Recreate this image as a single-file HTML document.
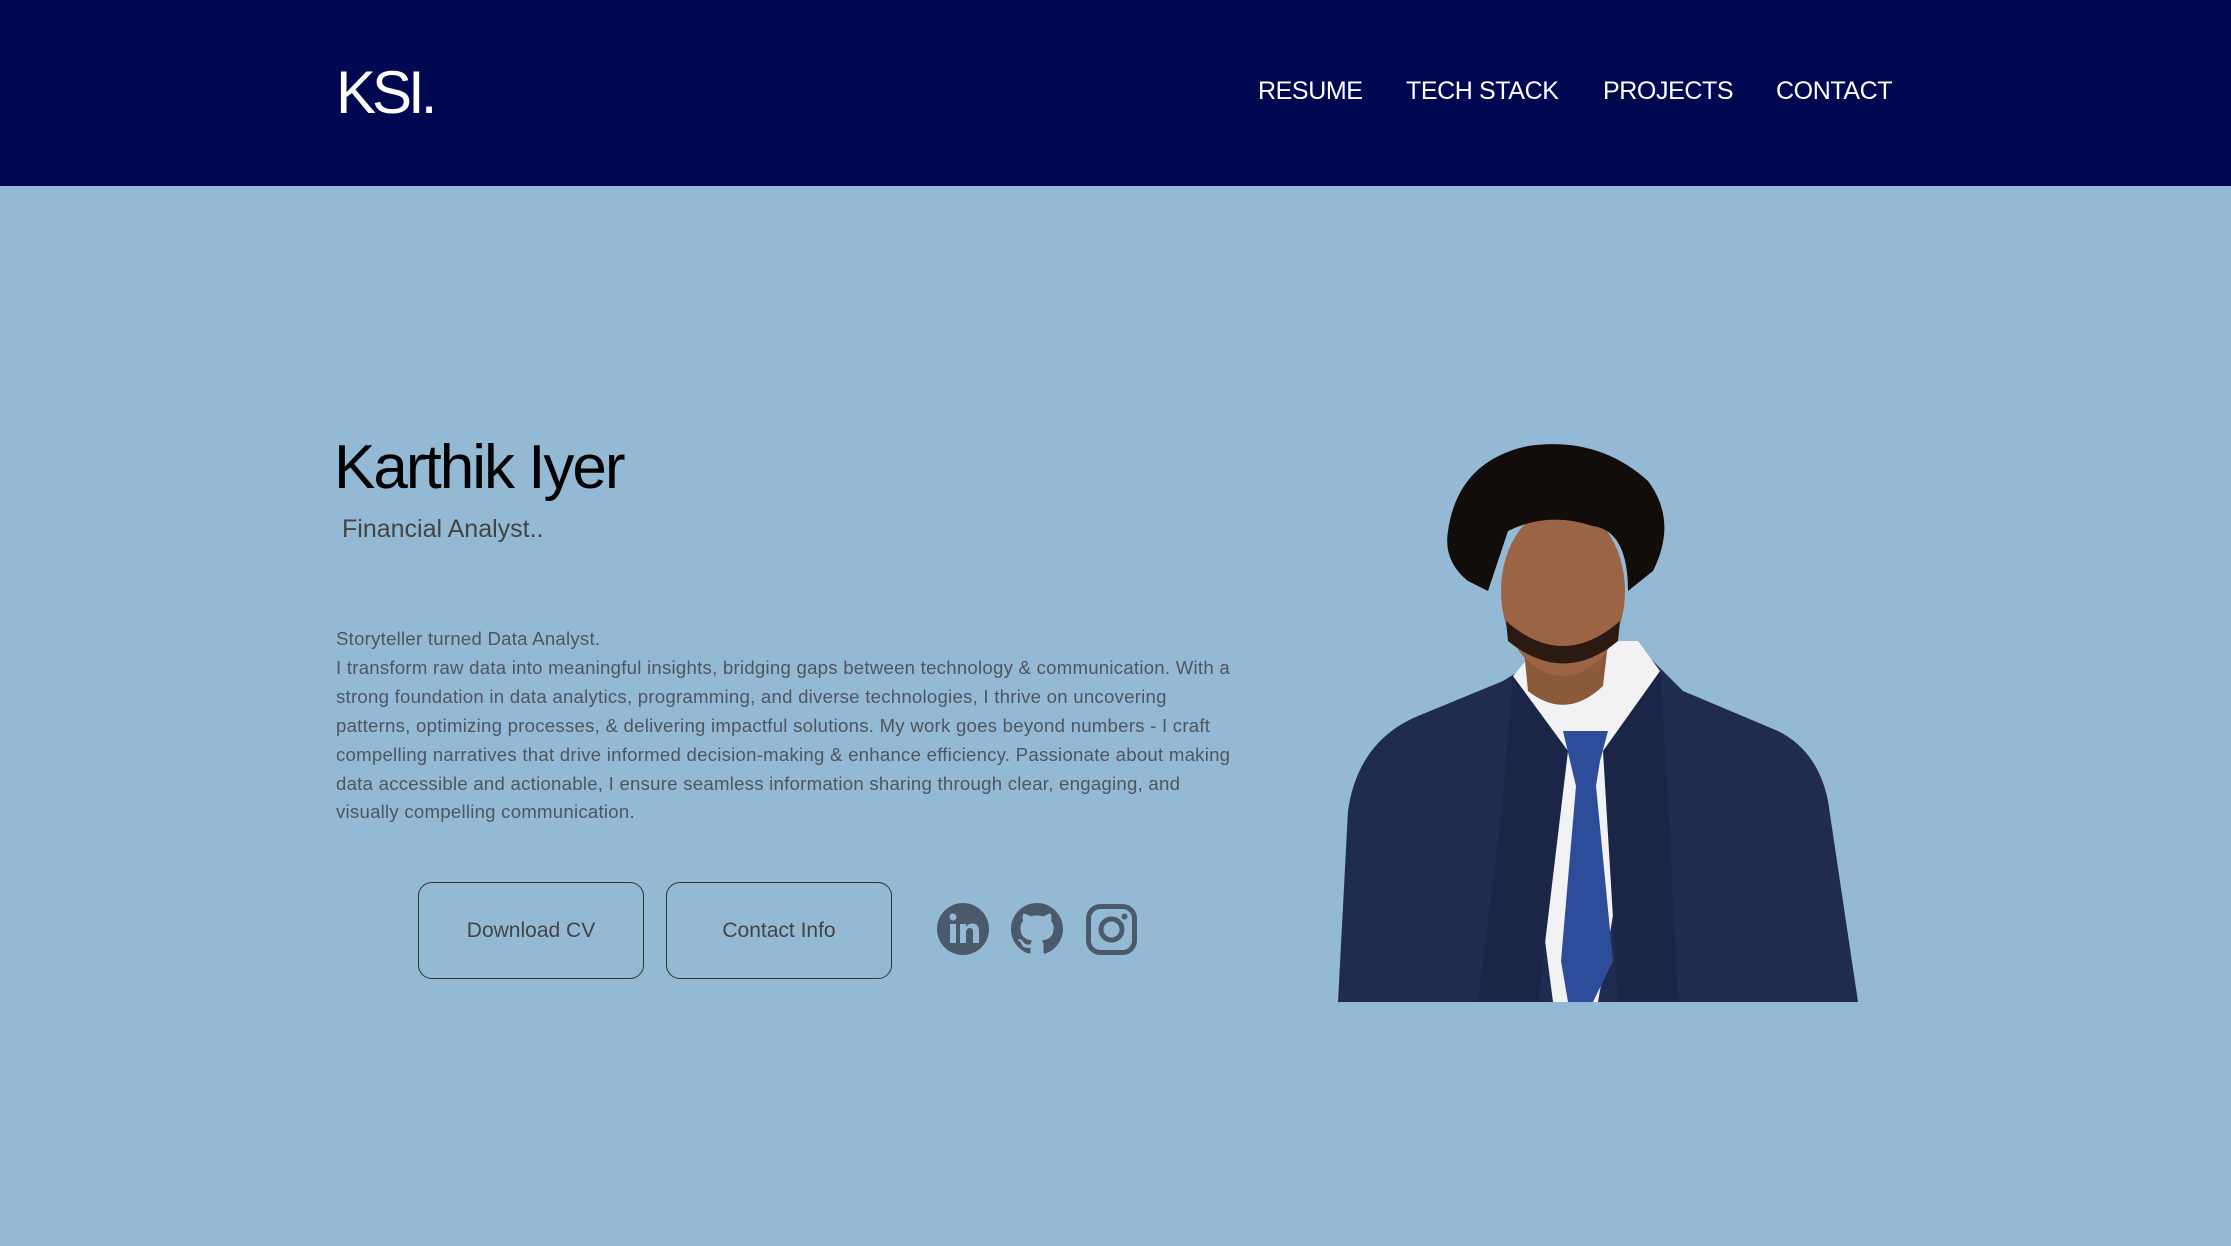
<!DOCTYPE html>
<html><head><meta charset="utf-8"><style>
*{margin:0;padding:0;box-sizing:border-box}
body{width:2231px;height:1246px;background:#94b9d5;font-family:"Liberation Sans",sans-serif;position:relative;overflow:hidden}
.hdr{position:absolute;left:0;top:0;width:2231px;height:186px;background:#000852}
.logo{position:absolute;left:336px;top:58px;font-size:60px;color:#fff;letter-spacing:-4px}
.nav{position:absolute;top:77px;font-size:25px;color:#fff;letter-spacing:-0.4px}
.name{position:absolute;left:334px;top:432px;font-size:62px;color:#000;letter-spacing:-2px}
.sub{position:absolute;left:342px;top:515px;font-size:25px;color:#444}
.para{position:absolute;left:336px;top:625px;width:910px;font-size:18.6px;line-height:28.9px;color:#4e5560;letter-spacing:0.25px}
.btn{position:absolute;top:882px;width:226px;height:97px;border:1.5px solid #333;border-radius:14px;font-size:21px;color:#444;display:flex;align-items:center;justify-content:center}
</style></head><body>
<div class="hdr">
<div class="logo">KSI.</div>
<div class="nav" style="left:1258px">RESUME</div>
<div class="nav" style="left:1406px">TECH STACK</div>
<div class="nav" style="left:1603px">PROJECTS</div>
<div class="nav" style="left:1776px">CONTACT</div>
</div>
<div class="name">Karthik Iyer</div>
<div class="sub">Financial Analyst..</div>
<div class="para">Storyteller turned Data Analyst.<br>I transform raw data into meaningful insights, bridging gaps between technology &amp; communication. With a strong foundation in data analytics, programming, and diverse technologies, I thrive on uncovering patterns, optimizing processes, &amp; delivering impactful solutions. My work goes beyond numbers - I craft compelling narratives that drive informed decision-making &amp; enhance efficiency. Passionate about making data accessible and actionable, I ensure seamless information sharing through clear, engaging, and visually compelling communication.</div>
<div class="btn" style="left:418px">Download CV</div>
<div class="btn" style="left:666px">Contact Info</div>
<svg style="position:absolute;left:937px;top:903px" width="52" height="52" viewBox="0 0 52 52"><circle cx="26" cy="26" r="26" fill="#4a5a6a"/><rect x="13" y="21" width="6" height="19" fill="#94b9d5"/><circle cx="16" cy="14" r="3.5" fill="#94b9d5"/><path d="M23 21h6v3c1.5-2.5 4-3.5 6.5-3.5 4.5 0 6.5 3 6.5 8V40h-6V29c0-2.5-1-4-3-4s-4 1.5-4 4.5V40h-6z" fill="#94b9d5"/></svg>
<svg style="position:absolute;left:1011px;top:903px" width="52" height="52" viewBox="0 0 16 16"><path fill="#4a5a6a" d="M8 0C3.580 0 0 3.58 0 8c0 3.54 2.29 6.53 5.47 7.59.4.07.55-.17.55-.38 0-.19-.01-.82-.01-1.49-2.01.37-2.530-.49-2.69-.94-.09-.23-.48-.94-.82-1.13-.28-.15-.68-.52-.01-.53.63-.01 1.08.58 1.23.82.72 1.21 1.87.87 2.33.66.07-.52.28-.87.51-1.07-1.78-.2-3.64-.89-3.64-3.95 0-.87.31-1.59.82-2.15-.08-.2-.36-1.02.08-2.12 0 0 .67-.21 2.2.82.64-.18 1.32-.27 2-.27.68 0 1.36.09 2 .27 1.53-1.04 2.2-.82 2.2-.82.44 1.1.16 1.92.08 2.12.51.56.82 1.27.82 2.15 0 3.07-1.87 3.75-3.65 3.95.29.25.54.73.54 1.48 0 1.07-.01 1.93-.01 2.2 0 .21.15.46.55.38A8.013 8.013 0 0016 8c0-4.42-3.58-8-8-8z"/></svg>
<svg style="position:absolute;left:1086px;top:904px" width="51" height="51" viewBox="0 0 51 51"><rect x="2.5" y="2.5" width="46" height="46" rx="12" fill="none" stroke="#4a5a6a" stroke-width="5"/><circle cx="25.5" cy="25.5" r="10.5" fill="none" stroke="#4a5a6a" stroke-width="5"/><circle cx="38.5" cy="12.5" r="3" fill="#4a5a6a"/></svg>
<svg style="position:absolute;left:1338px;top:441px" width="520" height="561" viewBox="0 0 520 561">
<path d="M0 561 L10 370 Q20 300 80 275 L165 240 L205 215 L310 215 L345 250 L440 290 Q480 310 490 360 L520 561Z" fill="#1f2b50"/>
<path d="M175 235 L205 200 L300 200 L322 230 L300 330 L260 561 L215 561 L185 330Z" fill="#f2f2f4"/>
<path d="M232 320 L262 320 L258 345 L275 520 L255 561 L230 561 L223 520 L238 345Z M225 290 L270 290 L262 320 L232 320Z" fill="#2d4c9a"/>
<path d="M175 235 L230 310 L200 561 L140 561 L165 360Z M322 230 L265 310 L280 561 L340 561 L330 360Z" fill="#1a2547"/>
<path d="M185 200 L190 250 Q228 280 265 245 L272 185Z" fill="#8a5a3a"/>
<ellipse cx="225" cy="150" rx="62" ry="85" fill="#9a6445"/>
<path d="M168 180 Q225 230 282 180 L280 200 Q226 245 170 200Z" fill="#2a1a12"/>
<path d="M110 90 Q120 20 190 5 Q260 -5 310 40 Q340 80 315 130 L290 150 Q290 90 255 85 Q210 70 170 90 Q160 120 150 150 L130 140 Q105 120 110 90Z" fill="#120c0a"/>
</svg>
</body></html>
